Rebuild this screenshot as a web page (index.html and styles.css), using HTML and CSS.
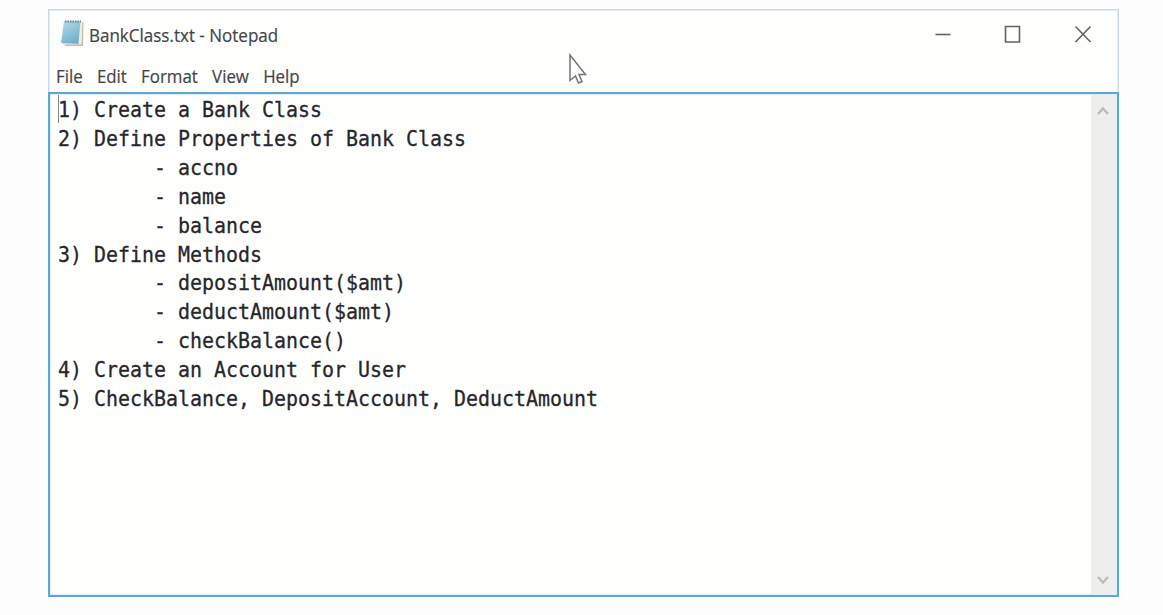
FILE: index.html
```html
<!DOCTYPE html>
<html lang="en">
<head>
<meta charset="utf-8">
<title>BankClass.txt - Notepad</title>
<link rel="stylesheet" href="styles.css">
</head>
<body>
<main class="window">
  <header class="titlebar">
    <svg class="app-icon" width="26" height="30" viewBox="0 0 26 30">
      <defs>
        <linearGradient id="cover" x1="0" y1="0" x2=".5" y2="1">
          <stop offset="0" stop-color="#b4dbe8"/>
          <stop offset="1" stop-color="#72b2cd"/>
        </linearGradient>
      </defs>
      <path d="M20 3 23.500 4.500 23 28 6 28 3 26Z" fill="#c0bbaa"/>
      <path d="M19 3 22.500 4 21.500 26.500 3 26.500Z" fill="#f1eee0"/>
      <path d="M4 3H20.500L18.500 26 1 25Z" fill="url(#cover)"/>
      <path d="M5 3.500H21" stroke="#6d8894" stroke-width="2" stroke-dasharray="1.5 1"/>
    </svg>
    <h1 class="title">BankClass.txt - Notepad</h1>
    <div class="controls">
      <svg width="18" height="20" viewBox="0 0 18 20"><path d="M1.500 10.500H16.500"/></svg>
      <svg width="18" height="20" viewBox="0 0 18 20"><path d="M1.500 2.500H15.500V18H1.500Z"/></svg>
      <svg width="18" height="20" viewBox="0 0 18 20"><path d="M1.500 2.500 16.500 18M16.500 2.500 1.500 18"/></svg>
    </div>
  </header>
  <nav class="menu"><span>File</span><span>Edit</span><span>Format</span><span>View</span><span>Help</span></nav>
  <section class="editor">
    <div class="page">
      <pre class="text">1) Create a Bank Class
2) Define Properties of Bank Class
        - accno
        - name
        - balance
3) Define Methods
        - depositAmount($amt)
        - deductAmount($amt)
        - checkBalance()
4) Create an Account for User
5) CheckBalance, DepositAccount, DeductAmount</pre>
      <i class="caret"></i>
    </div>
    <div class="scrollbar">
      <svg width="12" height="10" viewBox="0 0 12 10"><path d="M1 8 6 2.500 11 8"/></svg>
      <svg width="12" height="10" viewBox="0 0 12 10"><path d="M1 2 6 7.500 11 2"/></svg>
    </div>
  </section>
</main>
<svg class="pointer" width="22" height="34" viewBox="0 0 22 34"><path d="M2 2V27.500L7.500 23 10.500 30 14 28.500 11 21.500H17.500Z"/></svg>
</body>
</html>
```

FILE: styles.css
```css
* { box-sizing: border-box; }
body {
  margin: 0;
  height: 615px;
  padding: 9px 44px 0 48px;
  overflow: hidden;
  background: #fdfdfd;
  color: #444446;
  font-family: "Open Sans", "Noto Sans", sans-serif;
}
.window {
  display: flex;
  flex-direction: column;
  width: 1071px;
  height: 588px;
  background: #fefefd;
  box-shadow: inset 0 0 0 1.5px #c6dae8;
}
.titlebar {
  display: flex;
  align-items: center;
  height: 51px;
  padding: 0 27px 0 12px;
}
.app-icon { margin: -3px 3px 0 0; }
.title {
  margin: 0;
  font-size: 19px;
  font-weight: 400;
  line-height: 26px;
  white-space: nowrap;
  transform: scaleX(.895);
  transform-origin: left;
  -webkit-text-stroke: .2px;
}
.controls {
  display: flex;
  gap: 52px;
  margin: -2px 0 0 auto;
  fill: none;
  stroke: #636363;
  stroke-width: 1.6;
}
.menu {
  display: flex;
  gap: 16px;
  height: 32px;
  width: 400px;
  padding-left: 9px;
  font-size: 19px;
  line-height: 32px;
  transform: scaleX(.888);
  transform-origin: left;
  -webkit-text-stroke: .2px;
}
.editor {
  display: flex;
  flex: 1;
  border: 2px solid #66a3cd;
  box-shadow: inset 0 0 0 1px #d8f1fc;
}
.page {
  position: relative;
  flex: 1;
  padding: 2px 0 0 8px;
}
.text {
  margin: 0;
  color: #26262b;
  font-family: "DejaVu Sans Mono", monospace;
  font-size: 22px;
  line-height: 28.9px;
  transform: scaleX(.906);
  transform-origin: left;
  -webkit-text-stroke: .3px;
}
.caret {
  position: absolute;
  left: 8px;
  top: 1px;
  width: 1px;
  height: 28px;
  background: #888;
}
.scrollbar {
  display: flex;
  flex-direction: column;
  align-items: center;
  justify-content: space-between;
  width: 25px;
  margin: 1px 1px 1px 0;
  padding: 11px 1px 9px 0;
  background: #eeeeed;
  fill: none;
  stroke: #bababa;
  stroke-width: 2.2;
}
.pointer {
  position: absolute;
  left: 568px;
  top: 53px;
  fill: #fdfdfd;
  stroke: #747474;
  stroke-width: 1.5;
}
```
